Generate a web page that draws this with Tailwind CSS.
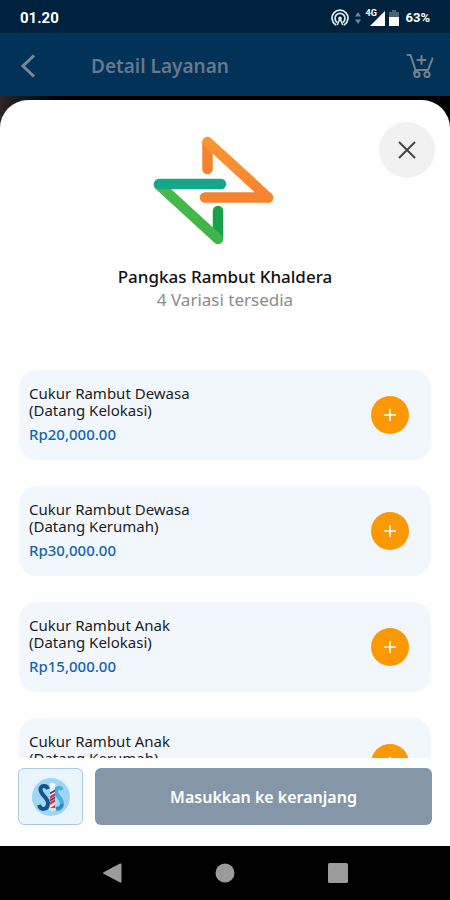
<!DOCTYPE html>
<html lang="id">
<head>
<meta charset="utf-8">
<meta name="viewport" content="width=device-width, initial-scale=1">
<title>Detail Layanan</title>
<script src="https://cdn.jsdelivr.net/npm/@tailwindcss/browser@4"></script>
</head>
<body class="flex h-screen flex-col overflow-hidden bg-black font-['Noto_Sans',sans-serif]">

  <!-- Status bar -->
  <div class="flex h-[33px] shrink-0 items-center justify-between bg-[#01223e] pt-[3px] pr-5 pl-5 font-['Roboto',sans-serif] text-white">
    <span class="text-[15px] leading-5 font-bold">01.20</span>
    <div class="flex items-center">
      <svg class="h-[18px] w-[18px]" viewBox="0 0 18 18" fill="none" stroke="#dfe7ee" stroke-width="1.700" stroke-linecap="round" aria-hidden="true">
        <path d="M4.600 15.800A8 8 0 1 1 13.400 15.800"/>
        <path d="M5.800 13.200A5 5 0 1 1 12.200 13.200"/>
        <path d="M9 9.500L6.500 15.500M9 9.500L11.500 15.500" stroke-width="1.500"/>
        <circle cx="9" cy="9.400" r="1.800" fill="#dfe7ee" stroke="none"/>
      </svg>
      <svg class="ml-[6px] h-3 w-[6px]" viewBox="0 0 6 12" fill="#6f8496" aria-hidden="true"><path d="M3 0l3 4.500H0zM3 12l3-4.500H0z"/></svg>
      <div class="relative ml-1 h-[18px] w-[20px]">
        <svg class="h-[18px] w-[20px]" viewBox="0 0 20 18" fill="#fff" aria-hidden="true"><path d="M20 2v15H5z"/></svg>
        <span class="absolute -top-[1px] left-0 text-[9px] leading-[11px] font-bold">4G</span>
      </div>
      <svg class="ml-1 h-[18px] w-[10px]" viewBox="0 0 10 18" aria-hidden="true"><path d="M3 1h4v2h3v6H0V3h3z" fill="#4a6377"/><path d="M0 8h10v9H0z" fill="#fff"/></svg>
      <span class="ml-[6px] text-[13px] leading-5 font-bold">63%</span>
    </div>
  </div>

  <!-- App bar -->
  <header class="flex h-[63px] shrink-0 items-center bg-[#023258] pt-[2px] pr-4 pl-5 text-[#66788a]">
    <button type="button" aria-label="Kembali" class="flex w-[71px] items-center">
      <svg class="h-6 w-4" viewBox="0 0 16 24" fill="none" stroke="#7d8790" stroke-width="3" aria-hidden="true"><path d="M14 1.500L3 12l11 10.500"/></svg>
    </button>
    <h1 class="flex-1 text-[19px] leading-6 font-semibold">Detail Layanan</h1>
    <button type="button" aria-label="Keranjang">
      <svg class="h-[26px] w-7" viewBox="0 0 28 26" fill="none" stroke="#75808a" stroke-width="2" stroke-linecap="round" stroke-linejoin="round" aria-hidden="true">
        <path d="M1.500 2H4.500L9.500 17H22L26.500 5.500"/>
        <path d="M9.500 17L8 20"/>
        <path d="M15.500 3v8M11.500 7h8"/>
        <circle cx="11" cy="21.500" r="2.600"/><circle cx="21" cy="21.500" r="2.600"/>
      </svg>
    </button>
  </header>

  <!-- Bottom sheet over the dimmed page -->
  <div class="flex min-h-0 flex-1 flex-col bg-linear-to-r from-[#2b2727] to-black to-20% pt-1">
    <main class="relative flex min-h-0 flex-1 flex-col rounded-t-[28px] bg-white">
      <button type="button" aria-label="Tutup" class="absolute top-[22px] right-[15px] flex size-14 items-center justify-center rounded-full bg-[#f1f1f1]">
        <svg class="size-[18px]" viewBox="0 0 18 18" fill="none" stroke="#444" stroke-width="1.900" aria-hidden="true"><path d="M1 1l16 16M17 1L1 17"/></svg>
      </button>

      <div class="flex flex-col items-center pt-9">
        <svg class="mr-6 h-[109px] w-[122px]" viewBox="0 0 122 109" fill="none" stroke-width="10.500" stroke-linecap="round" stroke-linejoin="round" role="img" aria-label="Logo">
          <defs>
            <linearGradient id="lime" x1="0" y1="0" x2="0" y2="1"><stop offset="0" stop-color="#4bb84b"/><stop offset="1" stop-color="#3fb449"/></linearGradient>
            <linearGradient id="orange" x1="0" y1="0" x2="0" y2="1"><stop offset="0" stop-color="#f8962f"/><stop offset="1" stop-color="#f58430"/></linearGradient>
          </defs>
          <path d="M66 75V102" stroke="#17a14a"/>
          <path d="M7 49L66 103" stroke="url(#lime)"/>
          <path d="M7 48H69" stroke="#14a78a"/>
          <path d="M55.500 33V6.500" stroke="#f58230"/>
          <path d="M55.500 6L116 61.500" stroke="url(#orange)"/>
          <path d="M116 61.500H53" stroke="#f58430"/>
        </svg>
        <h2 class="mt-5 text-[17px] leading-6 font-medium text-[#111]">Pangkas Rambut Khaldera</h2>
        <p class="text-[17px] leading-[22px] text-[#8b8b8b]">4 Variasi tersedia</p>
      </div>

      <ul class="mt-[59px] flex min-h-0 flex-1 flex-col gap-[26px] overflow-y-auto px-[19px] [scrollbar-width:none]">
        <li class="flex shrink-0 items-center justify-between rounded-[18px] bg-[#f2f7fe] pt-[15px] pr-[22px] pb-4 pl-[10px]">
          <div>
            <h3 class="text-[15px] leading-[17px] text-[#1c1c1c]">Cukur Rambut Dewasa<br>(Datang Kelokasi)</h3>
            <p class="mt-[5px] text-[15px] leading-5 font-medium text-[#1466a8]">Rp20,000.00</p>
          </div>
          <button type="button" aria-label="Tambah Cukur Rambut Dewasa (Datang Kelokasi)" class="flex size-[38px] items-center justify-center rounded-full bg-[#fc9803]">
            <svg class="size-3" viewBox="0 0 12 12" fill="none" stroke="#fff" stroke-width="1.600" aria-hidden="true"><path d="M6 0v12M0 6h12"/></svg>
          </button>
        </li>
        <li class="flex shrink-0 items-center justify-between rounded-[18px] bg-[#f2f7fe] pt-[15px] pr-[22px] pb-4 pl-[10px]">
          <div>
            <h3 class="text-[15px] leading-[17px] text-[#1c1c1c]">Cukur Rambut Dewasa<br>(Datang Kerumah)</h3>
            <p class="mt-[5px] text-[15px] leading-5 font-medium text-[#1466a8]">Rp30,000.00</p>
          </div>
          <button type="button" aria-label="Tambah Cukur Rambut Dewasa (Datang Kerumah)" class="flex size-[38px] items-center justify-center rounded-full bg-[#fc9803]">
            <svg class="size-3" viewBox="0 0 12 12" fill="none" stroke="#fff" stroke-width="1.600" aria-hidden="true"><path d="M6 0v12M0 6h12"/></svg>
          </button>
        </li>
        <li class="flex shrink-0 items-center justify-between rounded-[18px] bg-[#f2f7fe] pt-[15px] pr-[22px] pb-4 pl-[10px]">
          <div>
            <h3 class="text-[15px] leading-[17px] text-[#1c1c1c]">Cukur Rambut Anak<br>(Datang Kelokasi)</h3>
            <p class="mt-[5px] text-[15px] leading-5 font-medium text-[#1466a8]">Rp15,000.00</p>
          </div>
          <button type="button" aria-label="Tambah Cukur Rambut Anak (Datang Kelokasi)" class="flex size-[38px] items-center justify-center rounded-full bg-[#fc9803]">
            <svg class="size-3" viewBox="0 0 12 12" fill="none" stroke="#fff" stroke-width="1.600" aria-hidden="true"><path d="M6 0v12M0 6h12"/></svg>
          </button>
        </li>
        <li class="flex shrink-0 items-center justify-between rounded-[18px] bg-[#f2f7fe] pt-[15px] pr-[22px] pb-4 pl-[10px]">
          <div>
            <h3 class="text-[15px] leading-[17px] text-[#1c1c1c]">Cukur Rambut Anak<br>(Datang Kerumah)</h3>
            <p class="mt-[5px] text-[15px] leading-5 font-medium text-[#1466a8]">Rp25,000.00</p>
          </div>
          <button type="button" aria-label="Tambah Cukur Rambut Anak (Datang Kerumah)" class="flex size-[38px] items-center justify-center rounded-full bg-[#fc9803]">
            <svg class="size-3" viewBox="0 0 12 12" fill="none" stroke="#fff" stroke-width="1.600" aria-hidden="true"><path d="M6 0v12M0 6h12"/></svg>
          </button>
        </li>
      </ul>

      <div class="flex shrink-0 gap-3 bg-white px-[18px] pt-[10px] pb-[21px]">
        <button type="button" aria-label="Toko" class="flex h-[57px] w-[65px] shrink-0 items-center justify-center rounded-md border border-[#a9c9de] bg-[#eaf4fc]">
          <svg class="size-[38px]" viewBox="0 0 38 38" fill="none" aria-hidden="true">
            <circle cx="19" cy="19" r="19" fill="#9ed6f3"/>
            <path d="M16 11C14.500 6.500 8 7 8.500 12C9 17 16 19.500 16 25C16 32.500 8.500 32.500 7 27" stroke="#14548c" stroke-width="4"/>
            <path d="M30 12C28 8.500 24 9.500 24 13.500C24 18 30 20 30 25.500C30 31 26 32 23 30.500" stroke="#4aaedd" stroke-width="4"/>
            <path d="M24 30Q29 31 30 26" stroke="#2a86c4" stroke-width="3"/>
            <rect x="18" y="8" width="5" height="23" fill="#f6f5f7"/>
            <path d="M18 18l5-3v3l-5 3zM18 30l5-3v3l-5 2z" fill="#d7363c"/>
            <path d="M18 24l5-3v3l-5 3z" fill="#d7363c"/>
            <path d="M18 14.500l5-3v2l-5 3zM18 21.500l5-3v2l-5 3z" fill="#27418c"/>
            <circle cx="20.500" cy="7.500" r="2.800" fill="#fff"/>
            <rect x="17" y="30" width="7" height="3" rx="1" fill="#dbe4ea"/>
          </svg>
        </button>
        <button type="button" class="h-[57px] flex-1 rounded-md bg-[#8696a9] text-[16px] leading-6 font-semibold text-white">Masukkan ke keranjang</button>
      </div>
    </main>
  </div>

  <!-- System navigation -->
  <nav class="flex h-[54px] shrink-0 items-center justify-center gap-[93px] bg-black">
    <button type="button" aria-label="Kembali"><svg class="size-5" viewBox="0 0 20 20" fill="#9b9b9b" aria-hidden="true"><path d="M18 .5Q19.500 0 19.500 1.500V18.500Q19.500 20 18 19.500L1.500 10.800Q.5 10 1.500 9.200z"/></svg></button>
    <button type="button" aria-label="Beranda"><svg class="size-5" viewBox="0 0 20 20" fill="#9b9b9b" aria-hidden="true"><circle cx="10" cy="10" r="9.500"/></svg></button>
    <button type="button" aria-label="Aplikasi terbaru"><svg class="size-5" viewBox="0 0 20 20" fill="#9b9b9b" aria-hidden="true"><rect width="20" height="20" rx="1.500"/></svg></button>
  </nav>
</body>
</html>
